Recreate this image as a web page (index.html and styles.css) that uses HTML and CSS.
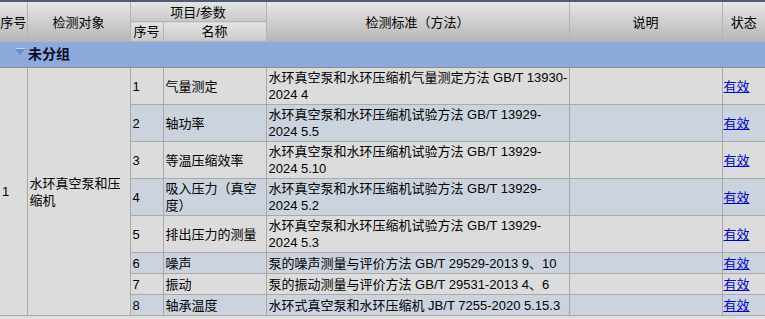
FILE: index.html
```html
<!DOCTYPE html>
<html>
	<head>
		<meta charset="UTF-8">
		<title>检测项目</title>
		<link rel="stylesheet" href="styles.css">
	</head>
	<body>
		<table class="grid">
			<colgroup>
				<col class="c_no">
				<col class="c_obj">
				<col class="c_ino">
				<col class="c_name">
				<col class="c_std">
				<col class="c_note">
				<col class="c_state">
			</colgroup>
			<thead>
				<tr class="h1">
					<th rowspan="2" class="tall">序号</th>
					<th rowspan="2" class="tall">检测对象</th>
					<th colspan="2">项目/参数</th>
					<th rowspan="2" class="tall">检测标准（方法）</th>
					<th rowspan="2" class="tall">说明</th>
					<th rowspan="2" class="tall">状态</th>
				</tr>
				<tr class="h2">
					<th>序号</th>
					<th>名称</th>
				</tr>
			</thead>
			<tbody>
				<tr class="group">
					<td colspan="7"><span class="tri"></span>未分组</td>
				</tr>
				<tr class="r odd">
					<td rowspan="8" class="merge">1</td>
					<td rowspan="8" class="merge">水环真空泵和压缩机</td>
					<td>1</td>
					<td>气量测定</td>
					<td>水环真空泵和水环压缩机气量测定方法 GB/T 13930-2024 4</td>
					<td></td>
					<td class="st"><a href="javascript:;">有效</a></td>
				</tr>
				<tr class="r even">
					<td>2</td>
					<td>轴功率</td>
					<td>水环真空泵和水环压缩机试验方法 GB/T 13929-2024 5.5</td>
					<td></td>
					<td class="st"><a href="javascript:;">有效</a></td>
				</tr>
				<tr class="r odd">
					<td>3</td>
					<td>等温压缩效率</td>
					<td>水环真空泵和水环压缩机试验方法 GB/T 13929-2024 5.10</td>
					<td></td>
					<td class="st"><a href="javascript:;">有效</a></td>
				</tr>
				<tr class="r even">
					<td>4</td>
					<td>吸入压力（真空度）</td>
					<td>水环真空泵和水环压缩机试验方法 GB/T 13929-2024 5.2</td>
					<td></td>
					<td class="st"><a href="javascript:;">有效</a></td>
				</tr>
				<tr class="r odd">
					<td>5</td>
					<td>排出压力的测量</td>
					<td>水环真空泵和水环压缩机试验方法 GB/T 13929-2024 5.3</td>
					<td></td>
					<td class="st"><a href="javascript:;">有效</a></td>
				</tr>
				<tr class="r even">
					<td>6</td>
					<td>噪声</td>
					<td>泵的噪声测量与评价方法 GB/T 29529-2013 9、10</td>
					<td></td>
					<td class="st"><a href="javascript:;">有效</a></td>
				</tr>
				<tr class="r odd">
					<td>7</td>
					<td>振动</td>
					<td>泵的振动测量与评价方法 GB/T 29531-2013 4、6</td>
					<td></td>
					<td class="st"><a href="javascript:;">有效</a></td>
				</tr>
				<tr class="r even">
					<td>8</td>
					<td>轴承温度</td>
					<td>水环式真空泵和水环压缩机 JB/T 7255-2020 5.15.3</td>
					<td></td>
					<td class="st"><a href="javascript:;">有效</a></td>
				</tr>
			</tbody>
		</table>
	</body>
</html>
```

FILE: styles.css
```css
body {
    margin: 0;
    padding: 0;
    background: #dedede;
    font: 13px/17px "Liberation Sans", "Noto Sans CJK SC", sans-serif;
    color: #000;
}

.grid {
    width: 765px;
    table-layout: fixed;
    border-collapse: collapse;
    border-top: 2px solid #4d5c72;
}

.c_no { width: 27px; }
.c_obj { width: 103px; }
.c_ino { width: 33px; }
.c_name { width: 103px; }
.c_std { width: 303px; }
.c_note { width: 153px; }
.c_state { width: 43px; }

.grid th {
    font-weight: normal;
    text-align: center;
    padding: 0;
    height: 19px;
    border: 1px solid #b4b4b4;
    border-top: 0;
    background: linear-gradient(#e4e4e4, #c9c9c9);
}

.grid .h1 th {
    height: 18px;
    padding-top: 1px;
}

.grid th.tall {
    background: linear-gradient(#e6e6e6, #b7b7b7);
}

.grid th:first-child,
.grid td:first-child {
    border-left: 0;
}

.grid th:last-child,
.grid td:last-child {
    border-right: 0;
}

.group td {
    height: 25px;
    padding: 0 0 0 15px;
    background: #8eaadb;
    border-bottom: 1px solid #8c8c8c;
    font: bold 14px/25px "Liberation Sans", "Noto Sans CJK SC", sans-serif;
    color: #0a0a28;
}

/* 分组前的小三角 */
.tri {
    display: inline-block;
    width: 0;
    height: 0;
    border-left: 5px solid transparent;
    border-right: 5px solid transparent;
    border-top: 6px solid #5d8fd0;
    vertical-align: 4px;
    margin-right: 3px;
    filter: drop-shadow(0 -1px 0 #c6dcf5);
}

.r td {
    height: 18px;
    padding: 1px 0 1px 2px;
    border: 1px solid #a9a9a9;
    vertical-align: middle;
}

.r td.st {
    padding-left: 1px;
}

.r.odd td {
    background: #dcdcdc;
}

.r.even td {
    background: #cbd3de;
}

.r td.merge {
    background: #dcdcdc;
}

.r td a {
    color: #0000dd;
    text-decoration: underline;
}
```
